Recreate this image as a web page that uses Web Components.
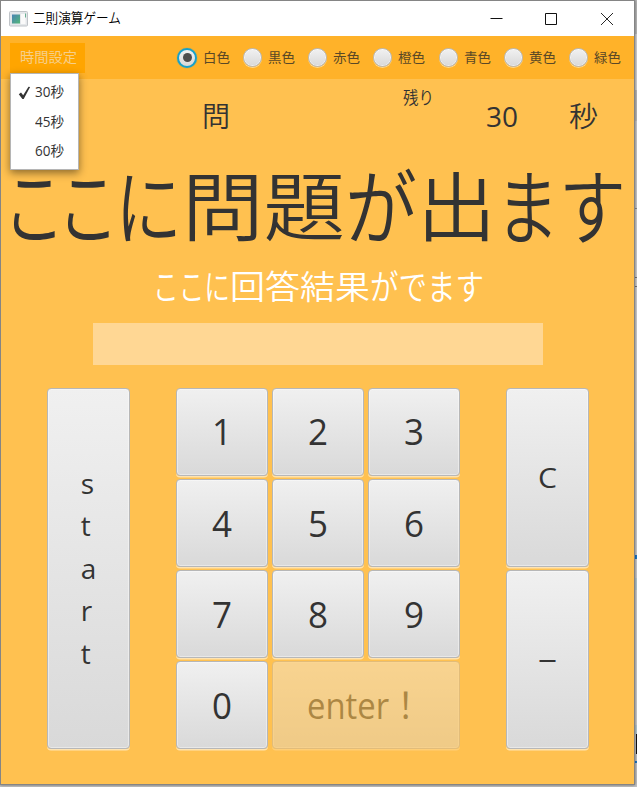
<!DOCTYPE html>
<html lang="ja">
<head>
<meta charset="utf-8">
<title>二則演算ゲーム</title>
<style>
html,body{margin:0;width:637px;height:787px;overflow:hidden}
body{font-family:"Open Sans","Noto Sans CJK JP",sans-serif;color:#333;background:
linear-gradient(#111,#111) right 0 top 734px/1px 20px no-repeat,
linear-gradient(#1b78c8,#1b78c8) right 0 top 761px/3px 2px no-repeat,
linear-gradient(#1b78c8,#1b78c8) right 0 top 555px/3px 4px no-repeat,
linear-gradient(#8d8d8d,#8d8d8d) right 0 top 208px/3px 1px no-repeat,
linear-gradient(#777,#777) right 0 top 277px/3px 1px no-repeat,
linear-gradient(#777,#777) right 0 top 286px/3px 1px no-repeat,
linear-gradient(#bbb 0 34px,#d5d5d5 34px 90px,#bcbcbc 90px 121px,#ccc 121px 208px,#d2d2d2 208px 442px,#cfcfcf 442px 578px,#b8cbd3 578px 590px,#cfcfcf 590px 725px,#b8cbd3 725px 734px,#c5c5c5 734px)}
</style>
</head>
<body>
<game-window></game-window>
<script>
const define=(name,css,html,ready)=>customElements.define(name,class extends HTMLElement{
  constructor(){super();this.attachShadow({mode:'open'}).innerHTML=`<style>${css}</style>${html}`}
  connectedCallback(){if(ready)ready.call(this,this.shadowRoot)}
});

// Text squeezed or stretched horizontally to a given advance width.
define('fit-text',':host{display:inline-block;white-space:nowrap}span{display:inline-block;transform-origin:0 50%}','<span><slot></slot></span>',function(root){
  const s=root.querySelector('span'),w=+this.getAttribute('w');
  const n=s.offsetWidth&&s.getBoundingClientRect().width;
  this.style.width=w+'px';
  if(n)s.style.transform=`scaleX(${w/n})`;
});

define('title-bar',`:host{display:flex;align-items:center;height:35px;background:#fff;color:#000;font-size:14px;padding:0 0 0 8px;box-sizing:border-box;font-weight:350;line-height:33px}
.name{margin-left:5px;flex:1;position:relative;top:-1px}.ctl{display:block;width:148px;height:34px}.app{display:block}`,
`<svg class="app" width="19" height="16" viewBox="0 0 19 16"><defs><linearGradient id="g" x2="1" y2="1"><stop stop-color="#4a83b4"/><stop offset="1" stop-color="#53b779"/></linearGradient></defs><rect x=".5" y=".5" width="18" height="14.5" rx="1" fill="#e4e7ea" stroke="#c0c4c8"/><rect x="3" y="3.5" width="8" height="9" fill="url(#g)"/><rect x="12" y="3" width="4.5" height="10" fill="#fafafa"/><path d="M16.5 2.5v4" stroke="#68ae91"/></svg>
<span class="name"><fit-text w="88">二則演算ゲーム</fit-text></span>
<svg class="ctl" viewBox="0 0 148 34" fill="none" stroke="#111"><path d="M4.500 16.500h12"/><path d="M59.500 11.500h11v11h-11z"/><path d="M115 11l12 12m0-12l-12 12" stroke-width=".9"/></svg>`);

define('color-radio',`:host{display:flex;align-items:center;width:65.150px;font-size:13px;color:#5a4826;line-height:20px}
i{box-sizing:border-box;width:19px;height:19px;border-radius:50%;border:1px solid #b9b9b9;background:linear-gradient(#f1f1f1,#d9d9d9);box-shadow:inset 0 0 0 .5px #fff,0 1px 0 #ffd98f;margin:0 6px 0 0;display:grid;place-items:center;flex:none}
:host([checked]) i{border:2px solid #16a0ca;width:20px;height:20px;margin:0 6px 0 -1px;box-shadow:0 0 1px #16a0ca}
:host([checked]) i::after{content:"";width:9px;height:9px;border-radius:50%;background:#4d4d4d}
span{position:relative;top:-1px}`,'<i></i><span><fit-text w="27"><slot></slot></fit-text></span>');

define('tool-bar',`:host{display:flex;align-items:center;height:43px;background:#ffb229;padding-left:9px;box-sizing:border-box}
.menu{width:76px;height:30px;line-height:28px;background:#ffa500;color:#f6cf8b;font-size:14px;text-align:center}
.radios{display:flex;margin-left:93px}`,
`<div class="menu"><fit-text w="57">時間設定</fit-text></div><div class="radios"><color-radio checked>白色</color-radio><color-radio>黒色</color-radio><color-radio>赤色</color-radio><color-radio>橙色</color-radio><color-radio>青色</color-radio><color-radio>黄色</color-radio><color-radio>緑色</color-radio></div>`);

define('time-menu',`:host{display:block;position:absolute;left:9px;top:72px;width:69px;height:97px;box-sizing:border-box;border:1px solid #b5b5b5;background:#fff;padding-top:4px;box-shadow:0 3px 8px rgba(0,0,0,.45);color:#333;font-size:14px}
div{display:grid;grid-template-columns:23.500px 1fr;height:29.500px;line-height:28px}svg{margin:8px 0 0 7px}`,
`<div><svg width="14" height="14" viewBox="0 0 14 14"><path d="M.8 8.200 3 6.400l2.200 2.800L10.500.8l1.600.3L5.700 13H4.400z" fill="#333"/></svg><fit-text w="29">30秒</fit-text></div><div><i></i><fit-text w="29">45秒</fit-text></div><div><i></i><fit-text w="29">60秒</fit-text></div>`);

define('status-row',`:host{display:grid;grid-template-columns:201px 201px 83px 83px 1fr;height:74px;font-size:28px;line-height:40px}
span{padding-top:17px}.small{font-size:17px;line-height:24px;padding-top:7px;font-weight:350}.q{font-weight:350}`,
`<b></b><span class="q">問</span><span class="small"><fit-text w="31">残り</fit-text></span><span><fit-text w="32">30</fit-text></span><span class="q"><fit-text w="29">秒</fit-text></span>`);

define('prompt-line',`:host{display:flex;white-space:nowrap;font-family:"Noto Sans CJK JP",sans-serif;font-weight:350}`,'<slot></slot>');

define('key-button',`:host{display:flex;align-items:center;justify-content:center;box-sizing:border-box;border:1px solid #b7b7b7;border-radius:4px;background:linear-gradient(#f0f0f0,#d9d9d9);box-shadow:inset 0 0 0 1px rgba(255,255,255,.4),0 1.500px 0 rgba(255,255,255,.55);font-size:36px;line-height:40px;white-space:pre}
:host([disabled]){opacity:.4}:host([side]){font-size:28px}:host([stack]){line-height:42.500px;display:block;padding:74px 0 0 33px}`,'<slot></slot>');

define('key-pad',`:host{display:grid;grid-template-columns:83px 284px 83px;column-gap:46px;padding-left:46px;height:361px}
.digits{display:grid;grid-template-columns:repeat(3,92px);column-gap:4px;grid-template-rows:repeat(4,87.500px);row-gap:3.660px}
.wide{grid-column:span 2;padding:2px 3px 0 0}.side{display:grid;grid-template-rows:178.700px 178.700px;row-gap:3.600px}
.start{line-height:42.500px;padding-bottom:1px}.minus{padding-bottom:5px}.low{padding-top:2px}`,
`<key-button side class="start">s
t
a
r
t</key-button><div class="digits">${[1,2,3,4,5,6,7,8,9,0].map((n,i)=>`<key-button class="${i>2?'low':''}"><fit-text w="20">${n}</fit-text></key-button>`).join('')}<key-button class="wide" disabled><fit-text w="115">enter！</fit-text></key-button></div>
<div class="side"><key-button side><fit-text w="19">C</fit-text></key-button><key-button side class="minus"><fit-text w="19">–</fit-text></key-button></div>`);

define('game-window',`:host{display:block;position:relative;box-sizing:border-box;width:635px;height:785px;border:1px solid #858585;background:#ffc150;box-shadow:0 0 3px rgba(0,0,0,.5)}
.big{font-size:75px;line-height:100px;height:108px;padding-left:6px}.big .kana{font-size:82px}.big .ko{margin:0 -4px}
.result{font-size:33px;line-height:48px;height:62px;padding-left:152px;color:#fff}.result .kana{font-size:35px}
.field{width:450px;height:42px;margin-left:92px;background:#ffd794}
key-pad{margin-top:23px}`,
`<title-bar></title-bar><tool-bar></tool-bar><status-row></status-row>
<prompt-line class="big"><fit-text class="kana ko" w="62">こ</fit-text><fit-text class="kana ko" w="62">こ</fit-text><fit-text class="kana" w="67">に</fit-text><fit-text w="163">問題</fit-text><fit-text class="kana" w="72">が</fit-text><fit-text w="79">出</fit-text><fit-text class="kana" w="63">ま</fit-text><fit-text class="kana" w="67">す</fit-text></prompt-line>
<prompt-line class="result"><fit-text class="kana" w="77">ここに</fit-text><fit-text w="140">回答結果</fit-text><fit-text class="kana" w="114">がでます</fit-text></prompt-line>
<div class="field"></div><key-pad></key-pad><time-menu></time-menu>`);
</script>
</body>
</html>
